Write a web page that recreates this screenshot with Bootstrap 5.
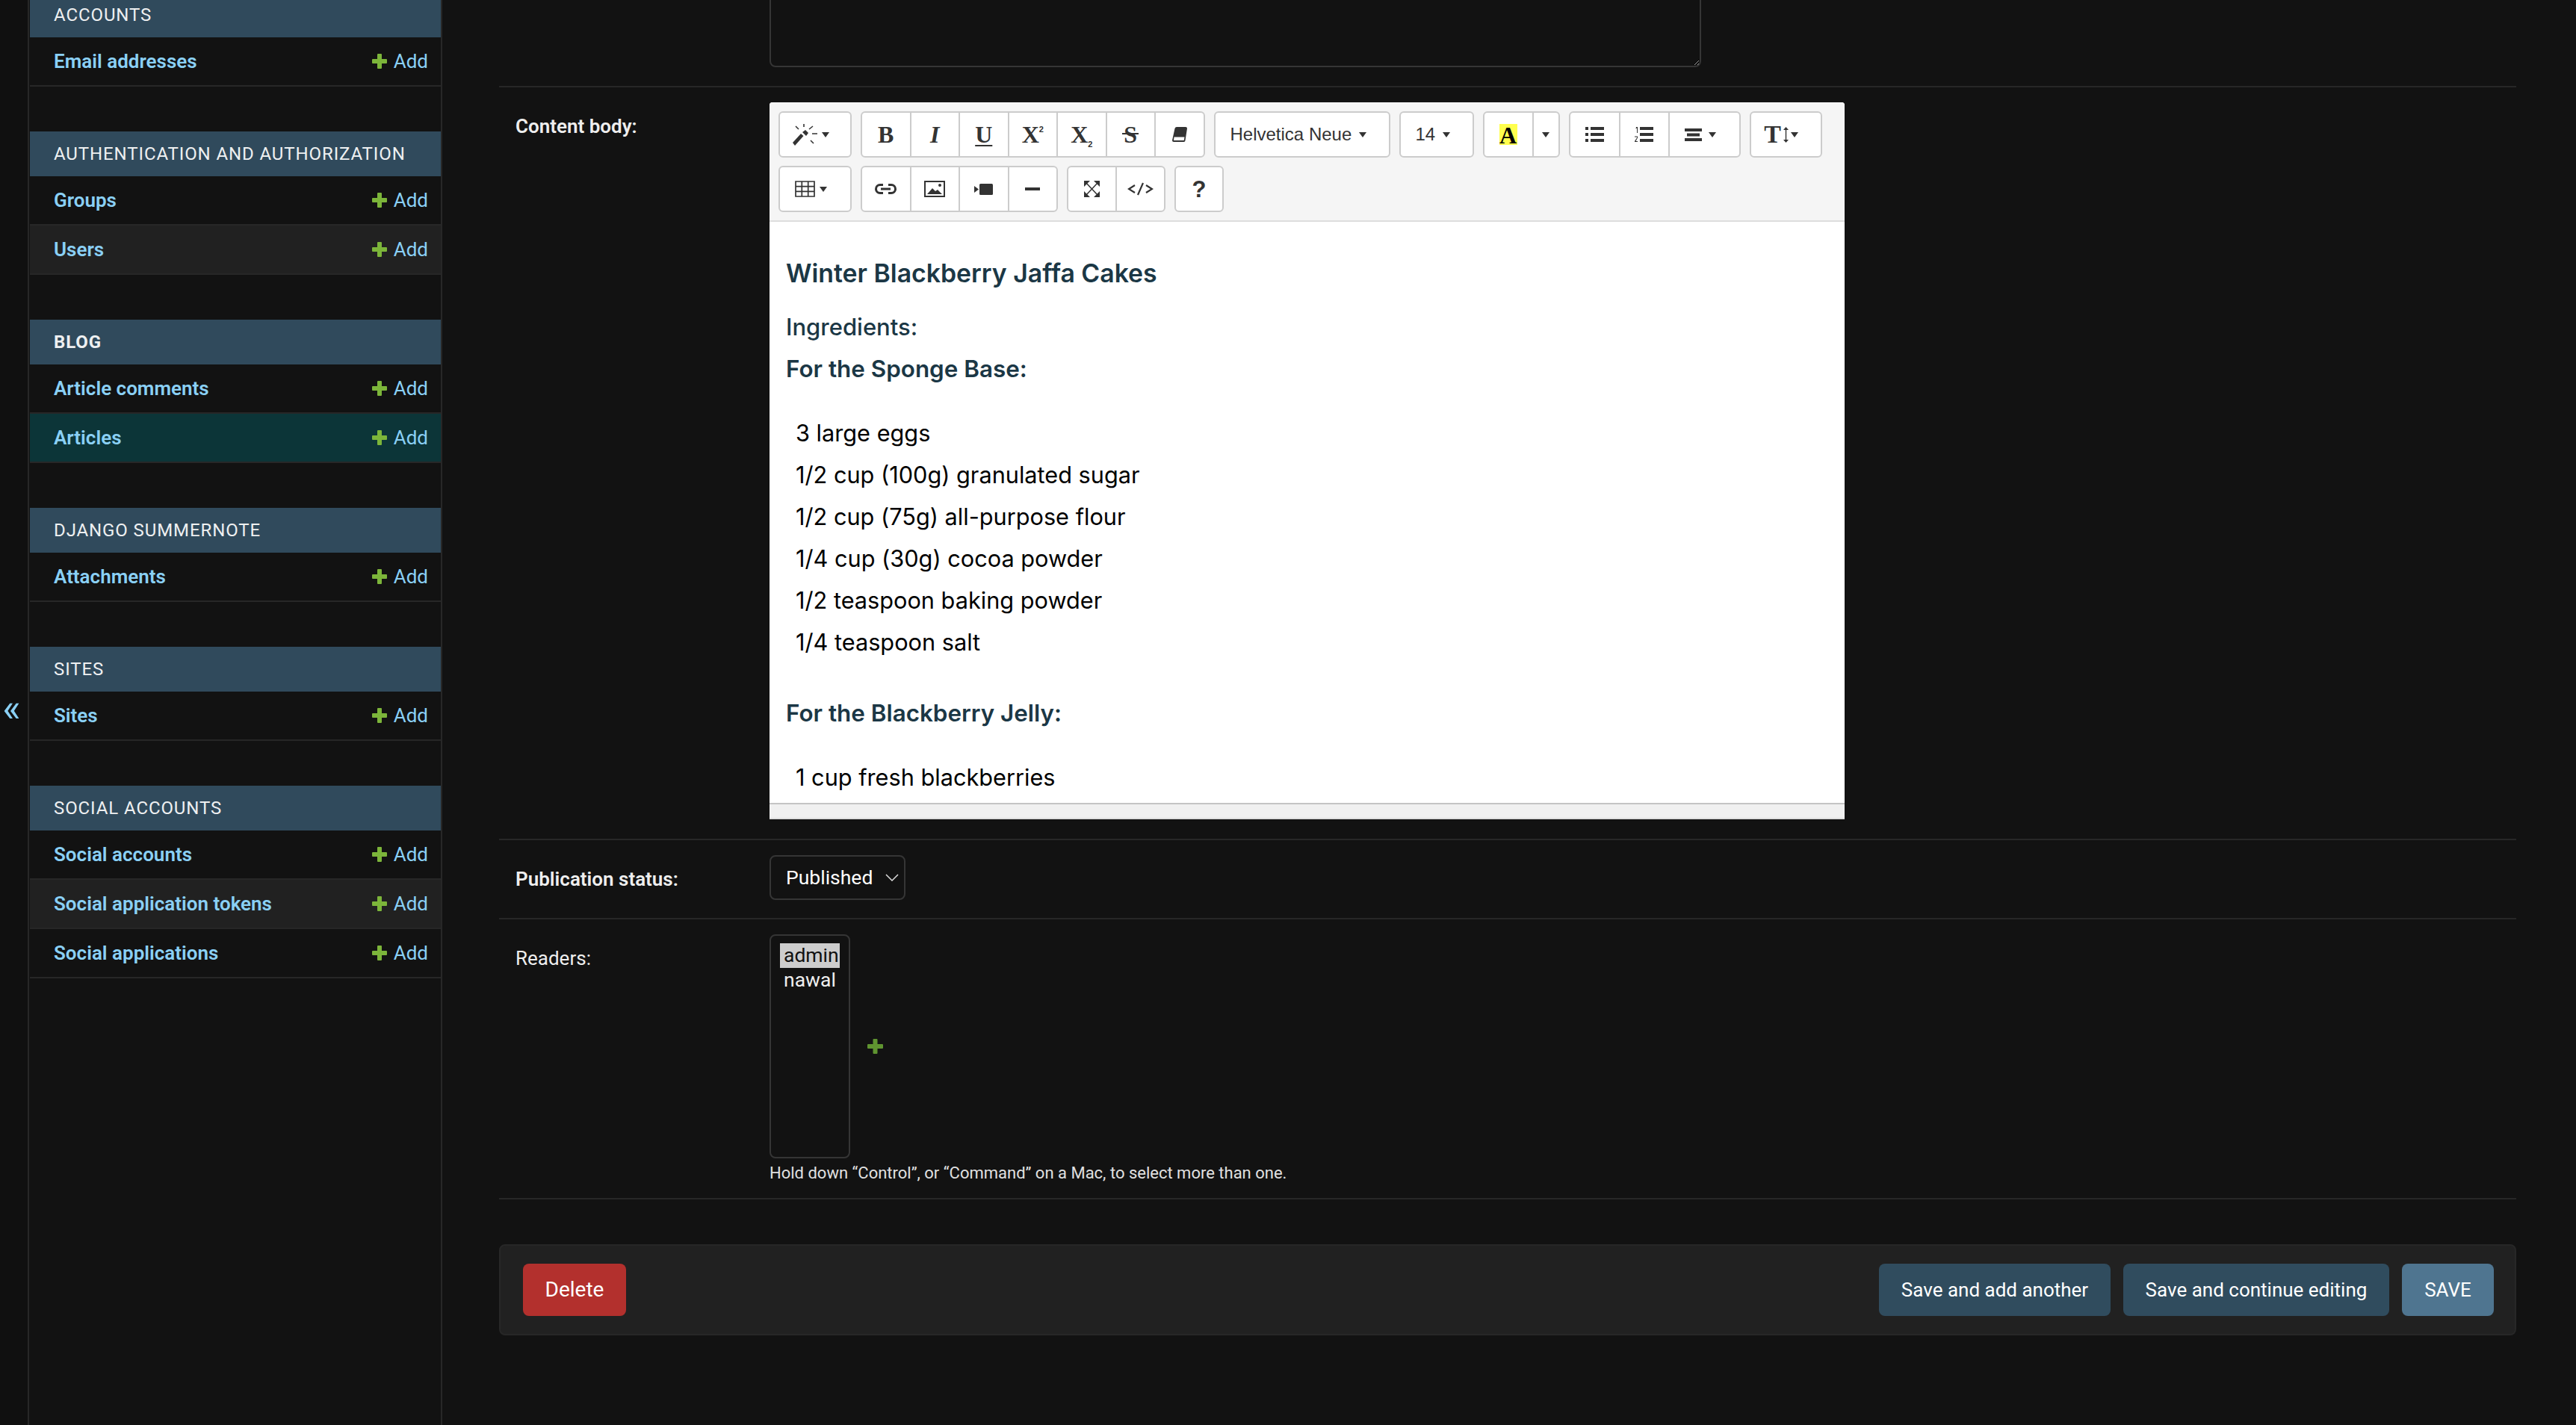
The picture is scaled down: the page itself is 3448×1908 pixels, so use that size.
<!doctype html>
<html lang="en" data-bs-theme="dark">
<head>
<meta charset="utf-8">
<title>Change article</title>
<link href="https://cdn.jsdelivr.net/npm/bootstrap@5.3.0/dist/css/bootstrap.min.css" rel="stylesheet">
<style>
html,body{height:1908px;overflow:hidden;background:#121212;}
body{font-family:Roboto,"Liberation Sans",sans-serif;font-size:26px;color:#eee;}
a{text-decoration:none;}
.shell{height:1908px;}
.toggler{width:37px;flex:none;color:#8ad0f5;font-size:52px;line-height:1;background:#101010;padding:0 6px 10px 0;}
.side{width:555px;flex:none;border-left:2px solid #272727;border-right:2px solid #272727;padding-left:1px;height:1908px;overflow:hidden;}
.side-in{margin-top:-10px;}
.mod{margin-bottom:60px;}
.cap{height:60px;line-height:60px;background:#304a5c;color:#eef0f1;padding-left:32px;font-size:24px;letter-spacing:.9px;text-transform:uppercase;}
.cap.now{font-weight:700;}
.arow{height:66px;border-bottom:2px solid #272727;padding:0 17px 0 32px;}
.arow.hov{background:#212121;}
.arow.sel{background:#0c3538;}
.mname{color:#8ad0f5;font-weight:600;}
.madd{color:#8ad0f5;font-weight:400;gap:9px;}
.plus{display:block;fill:#7cb53a;}
.mainc{padding:0 80px 0 76px;min-width:0;}
.frow{border-bottom:2px solid #272727;padding:20px 0 24px 22px;}
.frow.first{margin-top:-80px;padding-bottom:25px;}
.frow.ed{padding-bottom:26px;}
.frow.rd{padding-bottom:0;height:375px;}
.flabel{width:340px;flex:none;padding-top:15px;line-height:34px;font-size:26px;}
.flabel.req{font-weight:600;}
.ta{width:1247px;height:150px;background:transparent;border:2px solid #353535;border-radius:8px;}
.ed-box{width:1439px;height:960px;background:#fff;border-radius:4px 4px 0 0;overflow:hidden;color:#000;display:flex;flex-direction:column;}
.tb{background:#f5f5f5;height:160px;border-bottom:2px solid #ddd;padding:12px 12px 0;flex:none;}
.tb-row{gap:12px;height:62px;margin-bottom:11px;}
.tb .btn-group>.btn{flex:none;height:62px;background:#fff;border:2px solid #ccc;border-radius:6px;color:#333;padding:0;font-size:24px;font-family:"Liberation Sans",sans-serif;display:flex;align-items:center;justify-content:center;gap:6px;}
.tb .btn-group>.btn:not(:first-child){margin-left:-2px;border-top-left-radius:0;border-bottom-left-radius:0;}
.tb .btn-group>.btn:not(:last-child){border-top-right-radius:0;border-bottom-right-radius:0;}
.tb .btn-group>.btn.txtb{justify-content:flex-start;padding-left:20px;gap:10px;}
.tb .btn-group>.btn.lft{padding-right:12px;}
.tb .btn-group>.btn.lft2{padding-right:10px;gap:9px;}
.tb .btn-group>.btn.tght{padding-right:12px;gap:3px;}
.w68{width:67.5px;}.wc{width:68px;}.w67{width:67px;}.w675{width:67.5px;}.w98{width:98px;}.w236{width:236px;}.w100{width:100px;}.w37{width:37px;}.w97{width:97px;}.w66{width:66px;}.w69{width:69px;}
.tri{display:inline-block;width:0;height:0;border-left:5.5px solid transparent;border-right:5.5px solid transparent;border-top:7px solid #333;}
.ic{display:block;fill:#333;}
.ser{font-family:"Liberation Serif",serif;font-weight:700;font-size:32px;line-height:1;color:#333;}
.ser.big{font-size:34px;}
.ser i{font-style:italic;}
.ser u{text-underline-offset:3px;text-decoration-thickness:2px;}
.strk{position:relative;display:inline-block;}
.strk::after{content:"";position:absolute;left:-2px;right:-2px;top:14px;height:2px;background:#333;}
.ser sup,.ser sub{font-size:11px;font-family:"Liberation Sans",sans-serif;position:static;}
.ser sup{vertical-align:14px;line-height:0;}
.ser sub{vertical-align:-6px;line-height:0;}
.hl{background:#ffff4d;color:#000;width:24px;height:28px;line-height:30px;text-align:center;font-size:32px;}
.qm{font-weight:700;font-size:31px;line-height:1;color:#333;font-family:"Liberation Sans",sans-serif;}
.editable{flex:1;overflow:hidden;padding:41px 22px 0;font-family:Inter,"Liberation Sans",sans-serif;color:#000;}
.ed-t{font-size:33.800px;line-height:56px;font-weight:600;color:#1b3745;margin:0 0 16px;}
.ed-h{font-size:31.400px;line-height:56px;font-weight:600;color:#1b3745;margin:0 0 30px;}
.ed-h.lite{font-size:31px;font-weight:500;margin:0;}
.ed-l{list-style:none;padding:0 0 0 13px;margin:0 0 39px;font-size:30.700px;line-height:56px;}
.ed-foot{height:22px;flex:none;background:#f0f0f0;border-top:2px solid #c4c4c4;border-bottom:2px solid #ddd;}
.sel1{width:182px;height:60px;padding:0 0 0 20px;background-color:transparent;border:2px solid #353535;border-radius:8px;color:#fff;font-size:26.500px;font-family:Roboto,sans-serif;background-position:right 7px center;background-size:18px 10px;background-image:url("data:image/svg+xml,%3Csvg xmlns='http://www.w3.org/2000/svg' viewBox='0 0 18 10'%3E%3Cpath d='M1 1l8 8 8-8' fill='none' stroke='%23ddd' stroke-width='1.5'/%3E%3C/svg%3E");}
.selm{width:108px;height:300px;padding:10px 12px;background:transparent;border:2px solid #353535;border-radius:8px;color:#eee;font-size:26.500px;line-height:33px;font-family:Roboto,sans-serif;overflow:hidden;background-image:none;}
.selm option{padding:0 5px;min-height:33px;height:33px;line-height:33px;color:#eee;}
.selm option:checked{background:#cdcdcd linear-gradient(#cdcdcd,#cdcdcd);color:#111;}
.rdadd{margin-left:23px;}
.plus2{display:block;fill:#5f9430;}
.hint{font-size:22px;line-height:30px;color:#e0e0e0;margin:5px 0 0;}
.sub{margin-top:60px;height:122px;background:#212121;border:2px solid #272727;border-radius:8px;padding:0 28px 0 30px;}
.acts{gap:17px;}
.sub .btn{height:70px;border:0;border-radius:8px;font-size:26px;color:#fff;padding:0;font-family:Roboto,sans-serif;line-height:70px;}
.sub .btn.b-del{background:#b3302d;width:138px;font-size:28px;}
.b-sec{background:#304c5e;}
.b-a{width:310px;}.b-c{width:356px;}
.b-def{background:#4f7590;width:123px;}
</style>
</head>
<body>
<div class="d-flex shell">
  <div class="toggler d-flex align-items-center justify-content-center">«</div>
  <nav class="side">
    <div class="side-in">
      <div class="mod"><div class="cap">Accounts</div>
        <div class="arow d-flex justify-content-between align-items-center"><a class="mname" href="#">Email addresses</a><a class="madd d-flex align-items-center" href="#"><svg class="plus" width="20" height="20" viewBox="0 0 20 20"><rect x="7" width="6" height="20" rx="1"/><rect y="7" width="20" height="6" rx="1"/></svg>Add</a></div>
      </div>
      <div class="mod"><div class="cap">Authentication and Authorization</div>
        <div class="arow d-flex justify-content-between align-items-center"><a class="mname" href="#">Groups</a><a class="madd d-flex align-items-center" href="#"><svg class="plus" width="20" height="20" viewBox="0 0 20 20"><rect x="7" width="6" height="20" rx="1"/><rect y="7" width="20" height="6" rx="1"/></svg>Add</a></div>
        <div class="arow hov d-flex justify-content-between align-items-center"><a class="mname" href="#">Users</a><a class="madd d-flex align-items-center" href="#"><svg class="plus" width="20" height="20" viewBox="0 0 20 20"><rect x="7" width="6" height="20" rx="1"/><rect y="7" width="20" height="6" rx="1"/></svg>Add</a></div>
      </div>
      <div class="mod"><div class="cap now">Blog</div>
        <div class="arow d-flex justify-content-between align-items-center"><a class="mname" href="#">Article comments</a><a class="madd d-flex align-items-center" href="#"><svg class="plus" width="20" height="20" viewBox="0 0 20 20"><rect x="7" width="6" height="20" rx="1"/><rect y="7" width="20" height="6" rx="1"/></svg>Add</a></div>
        <div class="arow sel d-flex justify-content-between align-items-center"><a class="mname" href="#">Articles</a><a class="madd d-flex align-items-center" href="#"><svg class="plus" width="20" height="20" viewBox="0 0 20 20"><rect x="7" width="6" height="20" rx="1"/><rect y="7" width="20" height="6" rx="1"/></svg>Add</a></div>
      </div>
      <div class="mod"><div class="cap">Django Summernote</div>
        <div class="arow d-flex justify-content-between align-items-center"><a class="mname" href="#">Attachments</a><a class="madd d-flex align-items-center" href="#"><svg class="plus" width="20" height="20" viewBox="0 0 20 20"><rect x="7" width="6" height="20" rx="1"/><rect y="7" width="20" height="6" rx="1"/></svg>Add</a></div>
      </div>
      <div class="mod"><div class="cap">Sites</div>
        <div class="arow d-flex justify-content-between align-items-center"><a class="mname" href="#">Sites</a><a class="madd d-flex align-items-center" href="#"><svg class="plus" width="20" height="20" viewBox="0 0 20 20"><rect x="7" width="6" height="20" rx="1"/><rect y="7" width="20" height="6" rx="1"/></svg>Add</a></div>
      </div>
      <div class="mod"><div class="cap">Social Accounts</div>
        <div class="arow d-flex justify-content-between align-items-center"><a class="mname" href="#">Social accounts</a><a class="madd d-flex align-items-center" href="#"><svg class="plus" width="20" height="20" viewBox="0 0 20 20"><rect x="7" width="6" height="20" rx="1"/><rect y="7" width="20" height="6" rx="1"/></svg>Add</a></div>
        <div class="arow hov d-flex justify-content-between align-items-center"><a class="mname" href="#">Social application tokens</a><a class="madd d-flex align-items-center" href="#"><svg class="plus" width="20" height="20" viewBox="0 0 20 20"><rect x="7" width="6" height="20" rx="1"/><rect y="7" width="20" height="6" rx="1"/></svg>Add</a></div>
        <div class="arow d-flex justify-content-between align-items-center"><a class="mname" href="#">Social applications</a><a class="madd d-flex align-items-center" href="#"><svg class="plus" width="20" height="20" viewBox="0 0 20 20"><rect x="7" width="6" height="20" rx="1"/><rect y="7" width="20" height="6" rx="1"/></svg>Add</a></div>
      </div>
    </div>
  </nav>
  <main class="mainc flex-grow-1">
    <div class="frow first d-flex"><div class="flabel"></div><textarea class="ta form-control" aria-label="Summary"></textarea></div>
    <div class="frow ed d-flex">
      <label class="flabel req">Content body:</label>
      <div class="ed-box">
        <div class="tb">
          <div class="tb-row d-flex">
            <div class="btn-group"><button class="btn w98 lft" type="button"><svg class="ic" width="33" height="29" viewBox="0 0 33 29"><path d="M0 25L11 13l3.500 3L3 29z"/><path d="M13 11l4-3 4 4-3 4z"/><path d="M15 0v4M4 3l4 4M27 3l-5 4M26 13h7M24 22l4 4" fill="none" stroke="#333" stroke-width="1.600"/></svg><span class="tri"></span></button></div>
            <div class="btn-group">
              <button class="btn w68" type="button"><span class="ser">B</span></button>
              <button class="btn w68" type="button"><span class="ser"><i>I</i></span></button>
              <button class="btn w68" type="button"><span class="ser"><u>U</u></span></button>
              <button class="btn w68" type="button"><span class="ser">X<sup>2</sup></span></button>
              <button class="btn w68" type="button"><span class="ser">X<sub>2</sub></span></button>
              <button class="btn w68" type="button"><span class="ser strk">S</span></button>
              <button class="btn w68" type="button"><svg class="ic" width="20" height="20" viewBox="0 0 20 20"><path d="M6 0h12a2 2 0 0 1 2 2l-2.500 16a2 2 0 0 1-2 2H2a2 2 0 0 1-2-2L3.500 2A3 3 0 0 1 6 0z"/><path d="M2.500 13.500h14l-.8 4.500H2z" fill="#fff"/></svg></button>
            </div>
            <div class="btn-group"><button class="btn w236 txtb" type="button">Helvetica Neue <span class="tri"></span></button></div>
            <div class="btn-group"><button class="btn w100 txtb" type="button">14 <span class="tri"></span></button></div>
            <div class="btn-group">
              <button class="btn wc" type="button"><span class="ser hl">A</span></button>
              <button class="btn w37" type="button"><span class="tri"></span></button>
            </div>
            <div class="btn-group">
              <button class="btn w69" type="button"><svg class="ic" width="25" height="20" viewBox="0 0 25 20"><path d="M0 0h4v4H0zM7 0h18v4H7zM0 8h4v4H0zM7 8h18v4H7zM0 16h4v4H0zM7 16h18v4H7z"/></svg></button>
              <button class="btn wc" type="button"><svg class="ic" width="25" height="20" viewBox="0 0 25 20"><path d="M7 0h18v4H7zM7 8h18v4H7zM7 16h18v4H7zM2 0h2v8H3V1.500L1.500 2.500zM0 12.500h4v2L1.500 19H4v1H0v-1l3-4.500V13.500H0z"/></svg></button>
              <button class="btn w97 lft2" type="button"><svg class="ic" width="23" height="17" viewBox="0 0 23 17"><path d="M0 0h23v4H0zM3 6.500h17v4H3zM0 13h23v4H0z"/></svg><span class="tri"></span></button>
            </div>
            <div class="btn-group"><button class="btn w97 tght" type="button"><span class="ser big">T</span><svg class="ic" width="7" height="21" viewBox="0 0 7 21"><path d="M3.500 0L7 4H4.200v13H7l-3.500 4L0 17h2.800V4H0z"/></svg><span class="tri"></span></button></div>
          </div>
          <div class="tb-row d-flex">
            <div class="btn-group"><button class="btn w98 lft" type="button"><svg class="ic" width="27" height="22" viewBox="0 0 27 22"><path d="M1 1h25v20H1zM1 7.700h25M1 14.300h25M9.300 1v20M17.700 1v20" fill="none" stroke="#333" stroke-width="1.700"/></svg><span class="tri"></span></button></div>
            <div class="btn-group">
              <button class="btn w675" type="button"><svg class="ic" width="29" height="14" viewBox="0 0 29 14"><path d="M11 1.500H7a5.500 5.500 0 0 0 0 11h4M18 1.500h4a5.500 5.500 0 0 1 0 11h-4M8 7h13" fill="none" stroke="#333" stroke-width="3"/></svg></button>
              <button class="btn w675" type="button"><svg class="ic" width="28" height="22" viewBox="0 0 28 22"><path d="M1 1h26v20H1z" fill="none" stroke="#333" stroke-width="2"/><path d="M4 18l7-8 4 4 3-2 6 6z"/><circle cx="21" cy="6" r="2"/></svg></button>
              <button class="btn w675" type="button"><svg class="ic" width="25" height="15" viewBox="0 0 25 15"><path d="M0 3l6 4.500L0 12z"/><rect x="7" width="18" height="15" rx="1.500"/></svg></button>
              <button class="btn w675" type="button"><svg class="ic" width="20" height="4" viewBox="0 0 20 4"><path d="M0 0h20v4H0z"/></svg></button>
            </div>
            <div class="btn-group">
              <button class="btn w67" type="button"><svg class="ic" width="21" height="22" viewBox="0 0 21 22"><path d="M0 0h8L5.500 2.500 0 8zM21 0h-8l2.500 2.500L21 8zM0 22h8l-2.500-2.500L0 14zM21 22h-8l2.500-2.500L21 14z"/><path d="M3 3l15 16M18 3L3 19" fill="none" stroke="#333" stroke-width="1.500"/></svg></button>
              <button class="btn w67" type="button"><svg class="ic" width="35" height="18" viewBox="0 0 35 18"><path d="M10 4L2 9l8 5M25 4l8 5-8 5M21 1l-7 16" fill="none" stroke="#333" stroke-width="2.200"/></svg></button>
            </div>
            <div class="btn-group"><button class="btn w66" type="button"><span class="qm">?</span></button></div>
          </div>
        </div>
        <div class="editable">
          <p class="ed-t">Winter Blackberry Jaffa Cakes</p>
          <p class="ed-h lite">Ingredients:</p>
          <p class="ed-h">For the Sponge Base:</p>
          <ul class="ed-l">
            <li>3 large eggs</li>
            <li>1/2 cup (100g) granulated sugar</li>
            <li>1/2 cup (75g) all-purpose flour</li>
            <li>1/4 cup (30g) cocoa powder</li>
            <li>1/2 teaspoon baking powder</li>
            <li>1/4 teaspoon salt</li>
          </ul>
          <p class="ed-h">For the Blackberry Jelly:</p>
          <ul class="ed-l"><li>1 cup fresh blackberries</li></ul>
        </div>
        <div class="ed-foot"></div>
      </div>
    </div>
    <div class="frow d-flex">
      <label class="flabel req">Publication status:</label>
      <select class="form-select sel1" aria-label="Publication status"><option>Published</option><option>Draft</option></select>
    </div>
    <div class="frow rd d-flex">
      <label class="flabel">Readers:</label>
      <div>
        <div class="d-flex align-items-center">
          <select class="form-select selm" multiple aria-label="Readers"><option selected>admin</option><option>nawal</option></select>
          <a class="rdadd" href="#"><svg class="plus2" width="21" height="20" viewBox="0 0 21 20"><rect x="7.500" width="6" height="20" rx="1"/><rect y="7" width="21" height="6" rx="1"/></svg></a>
        </div>
        <p class="hint">Hold down “Control”, or “Command” on a Mac, to select more than one.</p>
      </div>
    </div>
    <div class="sub d-flex justify-content-between align-items-center">
      <a class="btn b-del" href="#">Delete</a>
      <div class="acts d-flex">
        <button class="btn b-sec b-a" type="button">Save and add another</button>
        <button class="btn b-sec b-c" type="button">Save and continue editing</button>
        <button class="btn b-def" type="button">SAVE</button>
      </div>
    </div>
  </main>
</div>
</body>
</html>
